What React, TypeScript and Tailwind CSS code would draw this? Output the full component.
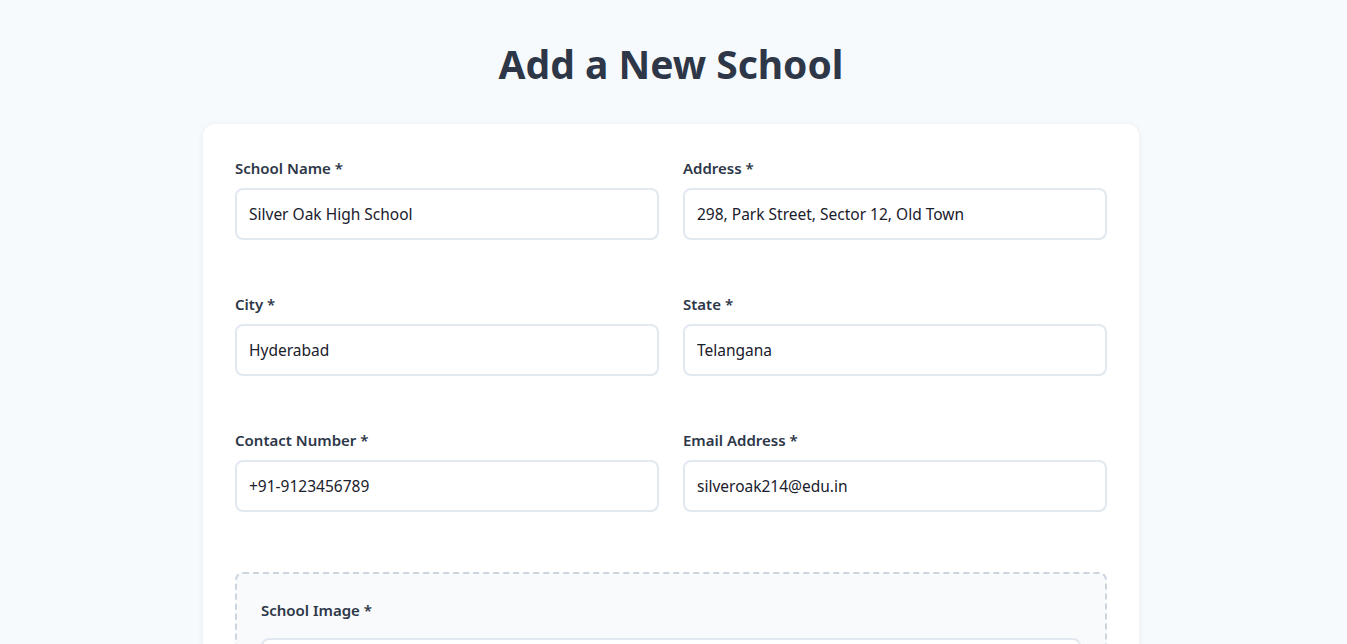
import React from "react";

const fields: { label: string; value: string }[] = [
  { label: "School Name *", value: "Silver Oak High School" },
  { label: "Address *", value: "298, Park Street, Sector 12, Old Town" },
  { label: "City *", value: "Hyderabad" },
  { label: "State *", value: "Telangana" },
  { label: "Contact Number *", value: "+91-9123456789" },
  { label: "Email Address *", value: "silveroak214@edu.in" },
];

export default function App() {
  return (
    <div
      className="min-h-screen bg-[#f7fafc] pr-[5px]"
      style={{ fontFamily: '"Noto Sans", "Open Sans", sans-serif' }}
    >
      <h1 className="pt-[40px] mb-[36px] text-center text-[39px] leading-[48px] font-bold text-[#2d3748]">
        Add a New School
      </h1>
      <div className="mx-auto w-[936px] rounded-xl bg-white p-8 shadow-[0_1px_6px_rgba(0,0,0,0.06)]">
        <div className="grid grid-cols-2 gap-x-6 gap-y-[52px]">
          {fields.map((f) => (
            <div key={f.label} className="flex flex-col">
              <label className="mb-2 text-[15px] leading-6 font-semibold text-[#2d3748]">
                {f.label}
              </label>
              <input
                readOnly
                value={f.value}
                className="h-[52px] rounded-lg border-2 border-[#e2e8f0] bg-white px-3 text-[15.5px] text-[#1a202c] outline-none"
              />
            </div>
          ))}
        </div>
        <div className="mt-[60px] rounded-lg border-2 border-dashed border-[#cbd5e0] bg-[#f8fafc] p-6">
          <label className="mb-4 block text-[15px] leading-6 font-semibold text-[#2d3748]">
            School Image *
          </label>
          <div className="h-[52px] rounded-lg border-2 border-[#e2e8f0] bg-white" />
        </div>
      </div>
    </div>
  );
}
